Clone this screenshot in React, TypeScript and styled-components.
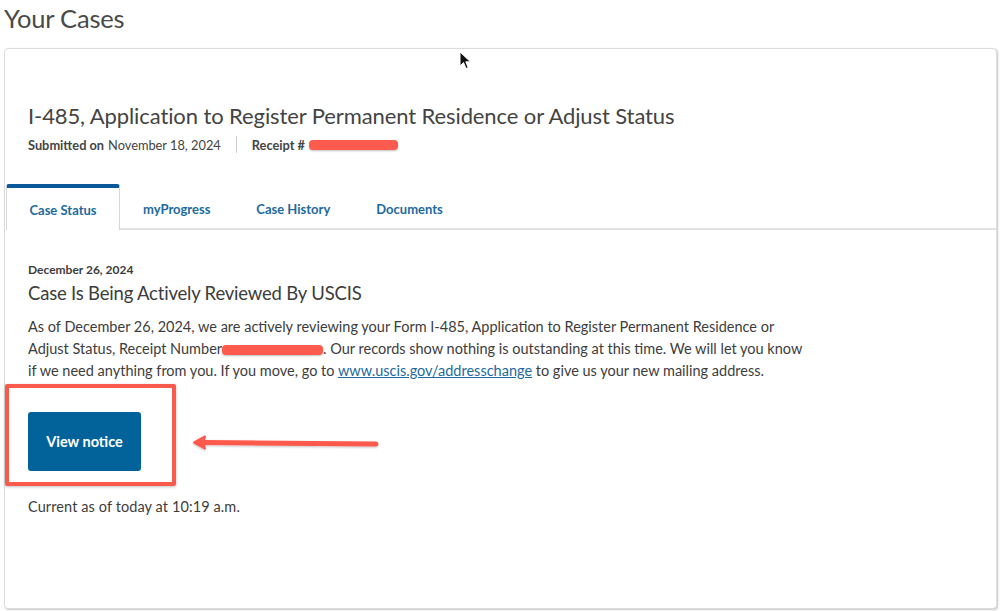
import React from "react";
import styled, { createGlobalStyle } from "styled-components";

const Global = createGlobalStyle`
  html, body { margin: 0; padding: 0; background: #fff; }
  body { font-family: Lato, "Noto Sans", sans-serif; color: #3d3d3d; }
  * { box-sizing: border-box; }
`;

const Page = styled.div`
  position: relative;
  width: 1000px;
  height: 611px;
  overflow: hidden;
  padding: 0 3px 0 4px;
`;

const PageTitle = styled.h1`
  margin: 0;
  padding-top: 3px;
  font-size: 25.5px;
  line-height: 30px;
  font-weight: 400;
  color: #4a4a4a;
  letter-spacing: -0.2px;
`;

const Card = styled.section`
  margin-top: 15px;
  height: 561px;
  border: 1px solid #dcdcdc;
  border-radius: 4px;
  box-shadow: 1px 1px 2px rgba(0, 0, 0, 0.22);
  background: #fff;
  display: flex;
  flex-direction: column;
`;

const CardHeader = styled.div`
  padding: 53px 23px 0;
`;

const CaseTitle = styled.h2`
  margin: 0;
  font-size: 22px;
  line-height: 28px;
  font-weight: 400;
  color: #444;
  letter-spacing: -0.1px;
`;

const Meta = styled.div`
  display: flex;
  align-items: center;
  margin-top: 6px;
  font-size: 12.8px;
  color: #444;
`;

const MetaItem = styled.span<{ $divider?: boolean }>`
  display: inline-flex;
  align-items: center;
  ${(p) =>
    p.$divider
      ? `padding-right: 15px; margin-right: 15px; border-right: 1px solid #cfcfcf; height: 17px;`
      : ``}
  b { font-weight: 700; margin-right: 4px; }
`;

const Redact = styled.span<{ $w: number }>`
  display: inline-block;
  width: ${(p) => p.$w}px;
  height: 10px;
  border-radius: 4px;
  background: #ff5a4e;
  box-shadow: 0 1px 2px rgba(0, 0, 0, 0.25);
  vertical-align: middle;
`;

const TabBar = styled.div`
  display: flex;
  margin-top: 31px;
  padding-left: 1px;
  height: 46px;
`;

const Tab = styled.div<{ $active?: boolean }>`
  display: flex;
  align-items: center;
  justify-content: center;
  padding: 2px 23px 0;
  font-size: 13px;
  font-weight: 700;
  color: #1d6a9e;
  border-top: 4px solid transparent;
  ${(p) =>
    p.$active
      ? `border-top-color: #0b579b; border-left: 1px solid #d6d6d6; border-right: 1px solid #d6d6d6; border-radius: 3px 3px 0 0; width: 114px; padding-left: 0; padding-right: 0;`
      : `border-bottom: 2px solid #e2e2e2;`}
`;

const TabFill = styled.div`
  flex: 1;
  border-bottom: 2px solid #e2e2e2;
`;

const Body = styled.div`
  position: relative;
  flex: 1;
  padding: 31px 23px 0;
`;

const DateLine = styled.div`
  font-size: 12px;
  font-weight: 700;
  line-height: 18px;
  color: #3d3d3d;
`;

const StatusTitle = styled.h3`
  margin: 2px 0 0;
  font-size: 18.5px;
  line-height: 24px;
  font-weight: 400;
  color: #3d3d3d;
  letter-spacing: -0.2px;
`;

const Para = styled.p`
  margin: 11px 0 0;
  width: 800px;
  font-size: 14.5px;
  line-height: 22px;
  color: #3d3d3d;
  letter-spacing: 0;
  a { color: #1d6a9e; text-decoration: underline; }
`;

const Button = styled.button`
  display: block;
  margin-top: 30px;
  width: 113px;
  height: 59px;
  border: none;
  border-radius: 3px;
  background: #02639a;
  color: #fff;
  font-family: inherit;
  font-size: 14.5px;
  font-weight: 700;
`;

const Current = styled.div`
  margin-top: 26px;
  font-size: 14.5px;
  line-height: 20px;
  color: #3d3d3d;
  letter-spacing: 0.1px;
`;

const Highlight = styled.div`
  position: absolute;
  left: 0px;
  top: 154px;
  width: 171px;
  height: 102px;
  border: 4px solid #f85a4b;
  border-radius: 2px;
  box-shadow: 0 1px 3px rgba(0, 0, 0, 0.25);
`;

const Arrow = styled.svg`
  position: absolute;
  left: 183px;
  top: 205px;
  overflow: visible;
`;

const Cursor = styled.svg`
  position: absolute;
  left: 459px;
  top: 51px;
`;

export default function App() {
  return (
    <Page>
      <Global />
      <PageTitle>Your Cases</PageTitle>
      <Card>
        <CardHeader>
          <CaseTitle>I-485, Application to Register Permanent Residence or Adjust Status</CaseTitle>
          <Meta>
            <MetaItem $divider>
              <b>Submitted on</b> November 18, 2024
            </MetaItem>
            <MetaItem>
              <b>Receipt #</b>
              <Redact $w={89} />
            </MetaItem>
          </Meta>
        </CardHeader>
        <TabBar>
          <Tab $active>Case Status</Tab>
          <Tab>myProgress</Tab>
          <Tab>Case History</Tab>
          <Tab>Documents</Tab>
          <TabFill />
        </TabBar>
        <Body>
          <DateLine>December 26, 2024</DateLine>
          <StatusTitle>Case Is Being Actively Reviewed By USCIS</StatusTitle>
          <Para>
            As of December 26, 2024, we are actively reviewing your Form I-485, Application to Register Permanent
            Residence or
            <br />
            Adjust Status, Receipt Number<Redact $w={101} />. Our records show nothing is outstanding at this time.
            We will let you know
            <br />
            if we need anything from you. If you move, go to <a href="#">www.uscis.gov/addresschange</a> to give us
            your new mailing address.
          </Para>
          <Button>View notice</Button>
          <Current>Current as of today at 10:19 a.m.</Current>
          <Highlight />
          <Arrow width="192" height="16" viewBox="0 0 192 16">
            <defs>
              <filter id="sh" x="-10%" y="-50%" width="120%" height="200%">
                <feDropShadow dx="0" dy="1" stdDeviation="1" floodOpacity="0.25" />
              </filter>
            </defs>
            <g filter="url(#sh)" fill="#fd5a4d" stroke="#fd5a4d" strokeLinecap="round" strokeLinejoin="round">
              <line x1="16" y1="7.5" x2="188" y2="9" strokeWidth="5" />
              <path d="M6 7.5 L17 1.5 L15 7.5 L17 13.5 Z" strokeWidth="2" />
            </g>
          </Arrow>
        </Body>
      </Card>
      <Cursor width="14" height="20" viewBox="0 0 14 20">
        <path d="M1 1 L1 15 L4.5 11.5 L7 17.5 L9.2 16.6 L6.8 10.8 L11.5 10.8 Z" fill="#111" stroke="#fff" strokeWidth="1" strokeLinejoin="round" />
      </Cursor>
    </Page>
  );
}
